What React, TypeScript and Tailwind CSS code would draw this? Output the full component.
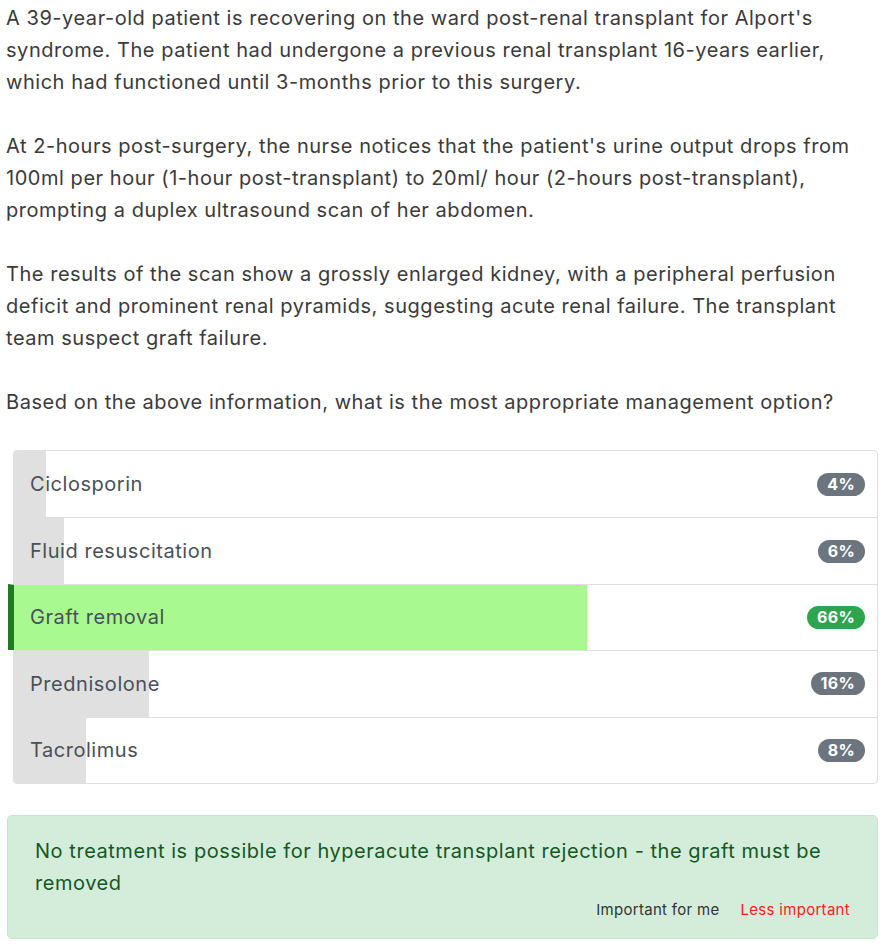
const options = [
  { label: 'Ciclosporin', pct: 4, bar: 3.7 },
  { label: 'Fluid resuscitation', pct: 6, bar: 5.8 },
  { label: 'Graft removal', pct: 66, bar: 66.4, correct: true },
  { label: 'Prednisolone', pct: 16, bar: 15.6 },
  { label: 'Tacrolimus', pct: 8, bar: 8.3 },
];

export default function App() {
  return (
    <main
      className="min-h-screen bg-white px-[7px] pt-[2px] text-[20px] leading-[32px] tracking-[0.54px] text-[#3a3a3a]"
      style={{ fontFamily: 'Inter, "Liberation Sans", sans-serif' }}
    >
      <p className="-ml-px mb-[32px]">
        A 39-year-old patient is recovering on the ward post-renal transplant for Alport's syndrome. The patient had
        undergone a previous renal transplant 16-years earlier, which had functioned until 3-months prior to this
        surgery.
      </p>
      <p className="-ml-px mb-[32px]">
        At 2-hours post-surgery, the nurse notices that the patient's urine output drops from 100ml per hour (1-hour
        post-transplant) to 20ml/ hour (2-hours post-transplant), prompting a duplex ultrasound scan of her abdomen.
      </p>
      <p className="-ml-px mb-[32px]">
        The results of the scan show a grossly enlarged kidney, with a peripheral perfusion deficit and prominent renal
        pyramids, suggesting acute renal failure. The transplant team suspect graft failure.
      </p>
      <p className="-ml-px mb-[32px]">Based on the above information, what is the most appropriate management option?</p>

      <div className="ml-[6px] mr-[3px] rounded-[4px] border border-[#dedede]">
        {options.map((o, i) => (
          <div
            key={o.label}
            className={
              'relative flex h-[66.4px] items-center ' +
              (i > 0 ? 'border-t border-[#dedede] ' : '') +
              (o.correct ? '-ml-[6px] border-l-[6px] border-l-[#1e7b21]' : '')
            }
          >
            <div
              className={'absolute inset-y-0 left-0 ' + (o.correct ? 'bg-[#a8f98f]' : 'bg-[#e0e0e0]')}
              style={{ width: `${o.bar}%` }}
            />
            <span className="relative pl-[16px] text-[#495057]">{o.label}</span>
            <span
              className={
                'relative ml-auto mr-[12px] rounded-full px-[10px] text-[16px] font-bold leading-[23px] tracking-[0.3px] text-white ' +
                (o.correct ? 'bg-[#2ea44f]' : 'bg-[#6c757d]')
              }
            >
              {o.pct}%
            </span>
          </div>
        ))}
      </div>

      <div className="mr-[3px] mt-[31px] rounded-[5px] border border-[#c3e6cb] bg-[#d4edda] px-[27px] pb-[16px] pt-[19px] text-[#155724]">
        <p>No treatment is possible for hyperacute transplant rejection - the graft must be removed</p>
        <div className="-mt-px flex justify-end gap-[21px] text-[15px] leading-[24px] tracking-[0.3px]">
          <span className="text-[#333]">Important for me</span>
          <span className="text-[#ff1a1a]">Less important</span>
        </div>
      </div>
    </main>
  );
}
